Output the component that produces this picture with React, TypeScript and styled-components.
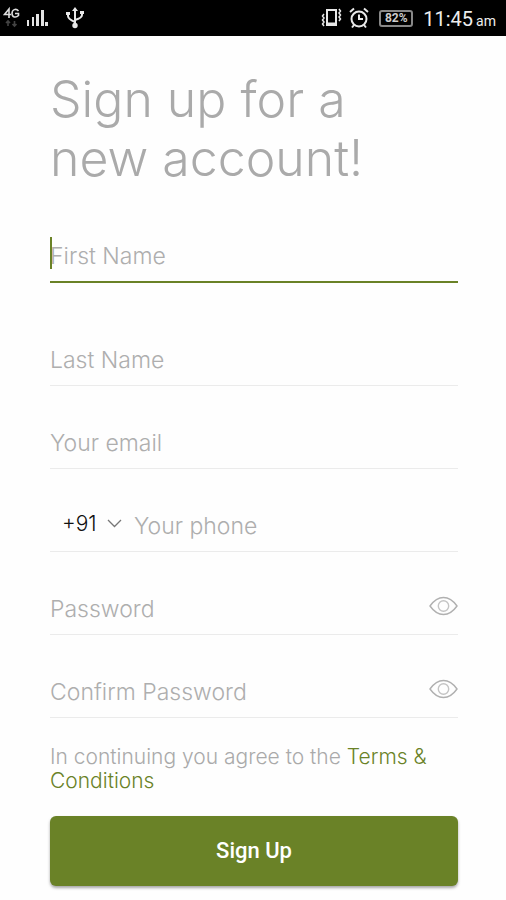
import React, { useState } from "react";
import styled, { createGlobalStyle } from "styled-components";

const green = "#6a8227";
const sans = `"Inter", "Liberation Sans", sans-serif`;

const GlobalStyle = createGlobalStyle`
  *, *::before, *::after { box-sizing: border-box; }
  body { margin: 0; background: #fefefe; font-family: ${sans}; font-weight: 300; color: #aaa; }
  button, input, select { font: inherit; color: inherit; }
`;

const StatusBar = styled.header`
  display: flex;
  align-items: center;
  justify-content: space-between;
  height: 36px;
  padding: 0 10px 0 3px;
  background: #000;
  color: #eee;
`;

const StatusGroup = styled.div<{ $gap: number }>`
  display: flex;
  align-items: center;
  gap: ${(p) => p.$gap}px;
`;

const UsbSlot = styled.span`
  display: flex;
  padding-left: 10px;
`;

const Battery = styled.span`
  display: flex;
  align-items: center;
  justify-content: center;
  width: 34px;
  height: 17px;
  margin-left: 3px;
  border: 2px solid #888;
  border-radius: 3px;
  font: 700 12px/12px Roboto, sans-serif;
  color: #ccc;
`;

const Clock = styled.time`
  font: 400 20px/24px Roboto, sans-serif;
  padding: 3px 0 0 3px;
  white-space: nowrap;
`;

const Meridiem = styled.span`
  font-size: 14px;
  margin-left: 3px;
`;

const Main = styled.main`
  padding: 34px 48px 14px 50px;
`;

const Title = styled.h1`
  margin: 0 0 43px;
  font-size: 50px;
  line-height: 59px;
  font-weight: 300;
  color: #aaa;
`;

const Form = styled.form`
  display: flex;
  flex-direction: column;
`;

const Field = styled.div<{ $active?: boolean }>`
  position: relative;
  display: flex;
  align-items: center;
  height: ${(p) => (p.$active ? 52 : 51)}px;
  margin-bottom: ${(p) => (p.$active ? 52 : 32)}px;
  border-bottom: ${(p) => (p.$active ? `2px solid ${green}` : "1px solid #ebebeb")};
  &:last-of-type { margin-bottom: 27px; }
`;

const Caret = styled.span`
  position: absolute;
  left: 0;
  top: 6px;
  width: 2px;
  height: 32px;
  background: ${green};
`;

const TextInput = styled.input`
  flex: 1;
  min-width: 0;
  height: 100%;
  padding: 0;
  border: 0;
  outline: 0;
  background: transparent;
  font-size: 23px;
  color: #333;
  &::placeholder { color: #aeaeae; opacity: 1; }
`;

const CodePicker = styled.div`
  display: flex;
  align-items: center;
  gap: 7px;
  padding: 0 12px 5px 12px;
`;

const CodeSelect = styled.select`
  appearance: none;
  width: 38px;
  padding: 0;
  border: 0;
  outline: 0;
  background: transparent;
  font-size: 21px;
  color: #111;
`;

const EyeButton = styled.button`
  display: flex;
  padding: 0 0 6px;
  border: 0;
  background: transparent;
`;

const Terms = styled.p`
  margin: 0 0 23px;
  font-size: 21px;
  line-height: 24px;
  color: #aaa;
`;

const TermsLink = styled.a`
  color: ${green};
  text-decoration: none;
`;

const SubmitButton = styled.button`
  height: 70px;
  border: 0;
  border-radius: 6px;
  background: ${green};
  box-shadow: 0 2px 3px rgba(0, 0, 0, 0.35);
  color: #fff;
  font: 500 22px/28px Roboto, sans-serif;
`;

const NetworkIcon = () => (
  <svg width="17" height="24" viewBox="0 0 17 24" fill="none" stroke="#ddd" strokeWidth="1.6">
    <path d="M6 12V3L1.500 8.500H8M15.500 5C13 2 9 3.500 9 7.500S13 12 15.500 9.500V7.500H12" />
    <path d="M5 15v5m-2-3 2-2 2 2M11.500 15v5m-2-2 2 2 2-2" stroke="#444" />
  </svg>
);

const SignalIcon = () => (
  <svg width="23" height="18" viewBox="0 0 23 18" fill="#e4e4e4">
    <path d="M1 11h2v6H1zM6 8h2v9H6zM10 5h3v12h-3zM15 1h3v16h-3zM19 13h3v4h-3z" />
  </svg>
);

const UsbIcon = () => (
  <svg width="20" height="22" viewBox="0 0 20 22" fill="none" stroke="#e8e8e8" strokeWidth="2">
    <path d="M10 4v14M3 7v2q0 3 7 6M17 6v2q0 3-7 5" />
    <path d="m10 0 3 4H7zM1 5h4v3H1zM15 4h4v3h-4z" fill="#e8e8e8" stroke="none" />
    <circle cx="10" cy="18.500" r="2.700" fill="#e8e8e8" stroke="none" />
  </svg>
);

const VibrateIcon = () => (
  <svg width="21" height="20" viewBox="0 0 21 20" fill="none" stroke="#e8e8e8">
    <rect x="6" y="2" width="9" height="15" strokeWidth="2" />
    <path d="M6 16h9" strokeWidth="3" />
    <path d="m3 6-1.500 2L3 10l-1.500 2L3 14l-1.500 2L3 18M18 1l1.500 2L18 5l1.500 2L18 9l1.500 2L18 13" strokeWidth="1.500" />
  </svg>
);

const AlarmIcon = () => (
  <svg width="20" height="22" viewBox="0 0 20 22" fill="none" stroke="#e8e8e8" strokeWidth="2">
    <circle cx="10" cy="12" r="7.500" />
    <path d="M10 7.500V12h4M1 5l4-3.500M19 5l-4-3.500M5 18l-2 2.500M15 18l2 2.500" />
  </svg>
);

const ChevronIcon = () => (
  <svg width="15" height="9" viewBox="0 0 15 9" fill="none" stroke="#777" strokeWidth="1.300">
    <path d="m1 1 6.500 6.500L14 1" />
  </svg>
);

const EyeIcon = () => (
  <svg width="29" height="20" viewBox="0 0 29 20" fill="none" stroke="#b0b0b0" strokeWidth="1.400">
    <path d="M1 10Q7 1.500 14.500 1.500T28 10Q22 18.500 14.500 18.500T1 10Z" />
    <circle cx="14.500" cy="10" r="5.200" stroke="#c4c4c4" />
  </svg>
);

function PasswordField({ label }: { label: string }) {
  const [visible, setVisible] = useState(false);
  return (
    <Field>
      <TextInput type={visible ? "text" : "password"} placeholder={label} aria-label={label} />
      <EyeButton type="button" aria-label={`Show ${label}`} onClick={() => setVisible(!visible)}>
        <EyeIcon />
      </EyeButton>
    </Field>
  );
}

export default function App() {
  const [firstName, setFirstName] = useState("");
  return (
    <>
      <GlobalStyle />
      <StatusBar>
        <StatusGroup $gap={6}>
          <NetworkIcon />
          <SignalIcon />
          <UsbSlot><UsbIcon /></UsbSlot>
        </StatusGroup>
        <StatusGroup $gap={7}>
          <VibrateIcon />
          <AlarmIcon />
          <Battery>82%</Battery>
          <Clock>11:45<Meridiem>am</Meridiem></Clock>
        </StatusGroup>
      </StatusBar>
      <Main>
        <Title>Sign up for a<br />new account!</Title>
        <Form onSubmit={(e) => e.preventDefault()}>
          <Field $active>
            {firstName === "" && <Caret />}
            <TextInput
              placeholder="First Name"
              aria-label="First Name"
              value={firstName}
              onChange={(e) => setFirstName(e.target.value)}
            />
          </Field>
          <Field><TextInput placeholder="Last Name" aria-label="Last Name" /></Field>
          <Field><TextInput type="email" placeholder="Your email" aria-label="Your email" /></Field>
          <Field>
            <CodePicker>
              <CodeSelect aria-label="Country code"><option>+91</option></CodeSelect>
              <ChevronIcon />
            </CodePicker>
            <TextInput type="tel" placeholder="Your phone" aria-label="Your phone" />
          </Field>
          <PasswordField label="Password" />
          <PasswordField label="Confirm Password" />
          <Terms>
            In continuing you agree to the <TermsLink href="#terms">Terms &amp; Conditions</TermsLink>
          </Terms>
          <SubmitButton type="submit">Sign Up</SubmitButton>
        </Form>
      </Main>
    </>
  );
}
